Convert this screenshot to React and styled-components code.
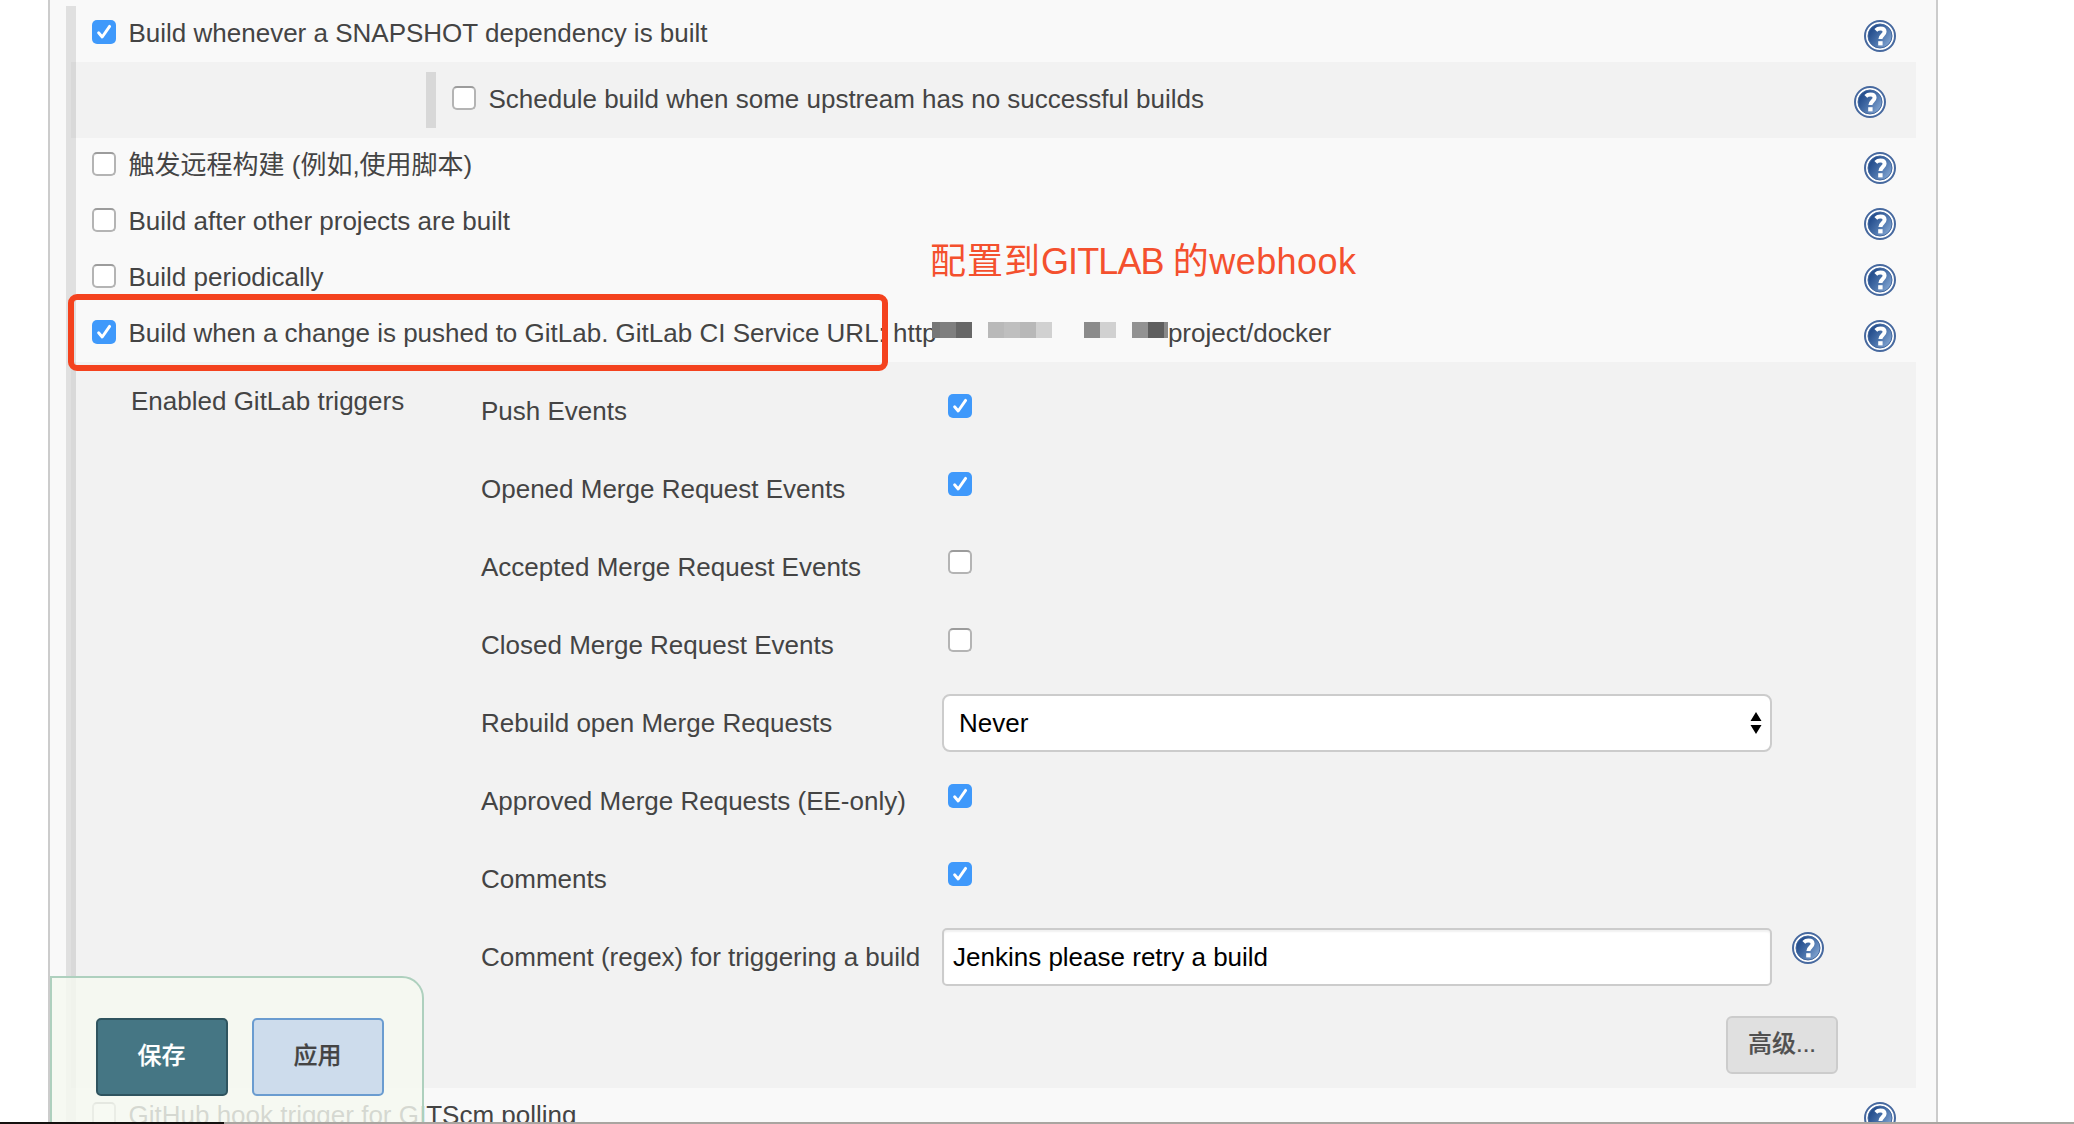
import React from "react";
import styled, { createGlobalStyle } from "styled-components";

const FONT = '"Liberation Sans", "Noto Sans CJK SC", sans-serif';

const Global = createGlobalStyle`
  * { box-sizing: border-box; }
  body { margin: 0; background: #fff; }
  button, input { font-family: inherit; margin: 0; }
`;

const Screen = styled.div`
  position: relative;
  width: 2074px;
  height: 1124px;
  overflow: hidden;
  padding-left: 48px;
  font: 26px/54px ${FONT};
  color: #444;
`;

const Panel = styled.main`
  width: 1890px;
  height: 1124px;
  padding: 6px 20px 0 16px;
  background: #f9f9f9;
  border: solid #ccc;
  border-width: 0 2px;
`;

const Section = styled.section`
  height: 1130px;
  border-left: 10px solid #e0e0e0;
`;

const Row = styled.div`
  display: flex;
  align-items: flex-start;
  height: 56px;
  padding: 14px 20px 0 16px;
`;

const NestedRow = styled.div`
  height: 76px;
  margin-left: -5px;
  padding: 10px 10px 10px 350px;
  background: #f2f2f2;
  border-left: 5px solid #d9d9d9;

  ${Row} {
    border-left: 10px solid #d8d8d8;
  }
`;

const Label = styled.span`
  margin: -14px 0 0 12.5px;
  height: 56px;
  white-space: pre;
`;

const Box = styled.span`
  flex: none;
  display: block;
  width: 24px;
  height: 24px;
  border-radius: 5px;
  background: ${(p) => (p.$on ? "#3f99fb" : "#fff")};
  border: ${(p) => (p.$on ? "0" : "2px solid #b4b4b4")};
  border-top-color: #9c9c9c;
  svg { display: block; }
`;

const HelpSlot = styled.span`
  flex: none;
  margin-left: auto;
  width: 32px;
  height: 32px;
  svg { display: block; }
`;

const Url = styled.span`
  margin-top: -14px;
  height: 56px;
  white-space: pre;
`;

const Mosaic = styled.span`
  display: flex;
  width: 236px;
  height: 16px;
  margin: 2px 0 0 -4.5px;
`;

const Tile = styled.i`
  flex: none;
  width: ${(p) => p.$w}px;
  height: 16px;
  background: ${(p) => p.$c};
`;

const Triggers = styled.div`
  display: flex;
  height: 726px;
  margin-left: -5px;
  padding: 10px 78px 0 55px;
  background: #f2f2f2;
  border-left: 5px solid #d9d9d9;
`;

const GroupTitle = styled.div`
  flex: none;
  width: 350px;
  padding-top: 2px;
`;

const Settings = styled.div`
  flex: 1;
  display: flex;
  flex-direction: column;
`;

const Setting = styled.div`
  display: grid;
  grid-template-columns: 461px 830px 52px;
  height: 78px;
`;

const SettingName = styled.span`
  line-height: 78px;
  white-space: pre;
`;

const Cell = styled.span`
  padding: ${(p) => p.$pad};
`;

const Select = styled.div`
  display: flex;
  align-items: center;
  justify-content: space-between;
  height: 58px;
  padding: 0 8px 0 15px;
  color: #000;
  background: #fff;
  border: 2px solid #ccc;
  border-radius: 8px;
`;

const Input = styled.input`
  display: block;
  width: 100%;
  height: 58px;
  padding: 0 9px;
  color: #000;
  font-size: 26px;
  background: #fff;
  border: 2px solid #ccc;
  border-radius: 5px;
  box-shadow: inset 0 2px 2px rgba(0, 0, 0, 0.06);
  outline: none;
`;

const Advanced = styled.button`
  align-self: flex-end;
  width: 112px;
  height: 58px;
  margin: 20px 0 0;
  padding: 0 0 7px;
  color: #505050;
  font-size: 24px;
  font-weight: 500;
  -webkit-text-stroke: 0.2px currentColor;
  background: #e0e0e0;
  border: 2px solid #ccc;
  border-radius: 6px;
`;

const Highlight = styled.div`
  position: absolute;
  left: 68px;
  top: 294px;
  width: 820px;
  height: 77px;
  border: 6px solid #f4421e;
  border-radius: 9px;
`;

const Annotation = styled.div`
  position: absolute;
  left: 930px;
  top: 237px;
  color: #f4502e;
  font-size: 36px;
  line-height: 50px;
  white-space: pre;
`;

const Spaced = styled.span`
  letter-spacing: ${(p) => p.$track}px;
`;

const Sticky = styled.footer`
  position: absolute;
  left: 50px;
  top: 976px;
  width: 374px;
  height: 160px;
  display: flex;
  gap: 24px;
  padding: 40px 0 0 44px;
  background: rgba(245, 249, 240, 0.82);
  border: 2px solid #aed0be;
  border-radius: 0 22px 0 0;
`;

const Action = styled.button`
  width: 132px;
  height: 78px;
  padding: 0 1px 7px 0;
  font-size: 24px;
  font-weight: 500;
  -webkit-text-stroke: 0.2px currentColor;
  color: ${(p) => (p.$primary ? "#fff" : "#444")};
  background: ${(p) => (p.$primary ? "#457684" : "#cddcec")};
  border: 2px solid ${(p) => (p.$primary ? "#2f545f" : "#6a9cd0")};
  border-radius: 5px;
`;

const BottomEdge = styled.div`
  position: absolute;
  left: 0;
  right: 0;
  top: 1122px;
  height: 2px;
  background: #a9a5a0;
  &::before {
    content: "";
    display: block;
    width: 224px;
    height: 2px;
    background: #15110f;
  }
`;

function Check({ on }) {
  return (
    <Box $on={on}>
      {on && (
        <svg width="24" height="24" viewBox="0 0 24 24" fill="none">
          <path d="M6.6 12.8 10.2 17 17.6 6.4" stroke="#fff" strokeWidth="2.9" strokeLinecap="round" strokeLinejoin="round" />
        </svg>
      )}
    </Box>
  );
}

function Help() {
  return (
    <HelpSlot>
      <svg width="32" height="32" viewBox="0 0 32 32" fill="none">
        <defs>
          <linearGradient id="ball" x1="6" y1="9" x2="27" y2="24" gradientUnits="userSpaceOnUse">
            <stop offset="0.1" stopColor="#27508f" />
            <stop offset="0.5" stopColor="#4a72aa" />
            <stop offset="1" stopColor="#86a8d4" />
          </linearGradient>
        </defs>
        <circle cx="16" cy="16" r="15" fill="#fff" stroke="#47699f" strokeWidth="2" />
        <circle cx="16" cy="16" r="12" fill="url(#ball)" stroke="#44699f" strokeWidth="1" />
        <path d="M11.8 10.4C13.2 9 14.8 8.6 16.4 8.6c2.7 0 4.2 1.2 4.2 3.2 0 3-4.2 3.4-4.2 7.2" stroke="#fff" strokeWidth="4" />
        <rect x="14.2" y="21.2" width="4.4" height="4.2" fill="#fff" />
      </svg>
    </HelpSlot>
  );
}

function Trigger({ on, children }) {
  return (
    <Row>
      <Check on={on} />
      <Label>{children}</Label>
      <Help />
    </Row>
  );
}

function CheckSetting({ name, on }) {
  return (
    <Setting>
      <SettingName>{name}</SettingName>
      <Cell $pad="22px 6px"><Check on={on} /></Cell>
    </Setting>
  );
}

const tiles = [
  [8, "#777"], [16, "#7f7f7f"], [16, "#676767"], [16, "transparent"],
  [16, "#b9b9b9"], [16, "#bfbfbf"], [16, "#b8b8b8"], [16, "#d1d1d1"], [32, "transparent"],
  [16, "#8b8b8b"], [16, "#d1d1d1"], [16, "transparent"],
  [16, "#929292"], [16, "#5e5e5e"], [4, "#888"],
];

export default function App() {
  return (
    <Screen>
      <Global />
      <Panel>
        <Section>
          <Trigger on>Build whenever a SNAPSHOT dependency is built</Trigger>
          <NestedRow>
            <Trigger>Schedule build when some upstream has no successful builds</Trigger>
          </NestedRow>
          <Trigger>触发远程构建 (例如,使用脚本)</Trigger>
          <Trigger>Build after other projects are built</Trigger>
          <Trigger>Build periodically</Trigger>
          <Row>
            <Check on />
            <Label>Build when a change is pushed to GitLab. GitLab CI Service URL: http</Label>
            <Mosaic>
              {tiles.map(([w, c], i) => <Tile key={i} $w={w} $c={c} />)}
            </Mosaic>
            <Url>project/docker</Url>
            <Help />
          </Row>
          <Triggers>
            <GroupTitle>Enabled GitLab triggers</GroupTitle>
            <Settings>
              <CheckSetting name="Push Events" on />
              <CheckSetting name="Opened Merge Request Events" on />
              <CheckSetting name="Accepted Merge Request Events" />
              <CheckSetting name="Closed Merge Request Events" />
              <Setting>
                <SettingName>Rebuild open Merge Requests</SettingName>
                <Cell $pad="10px 0">
                  <Select>
                    Never
                    <svg width="12" height="24" viewBox="0 0 12 24">
                      <path d="M6 1 11.5 10H.5ZM6 23 .5 14h11Z" fill="#000" />
                    </svg>
                  </Select>
                </Cell>
              </Setting>
              <CheckSetting name="Approved Merge Requests (EE-only)" on />
              <CheckSetting name="Comments" on />
              <Setting>
                <SettingName>Comment (regex) for triggering a build</SettingName>
                <Cell $pad="10px 0"><Input defaultValue="Jenkins please retry a build" /></Cell>
                <Cell $pad="14px 0 0 20px"><Help /></Cell>
              </Setting>
              <Advanced>高级...</Advanced>
            </Settings>
          </Triggers>
          <Trigger>GitHub hook trigger for GITScm polling</Trigger>
        </Section>
      </Panel>
      <Highlight />
      <Annotation>
        <Spaced $track={1}>配置到</Spaced>
        <Spaced $track={-0.9}>GITLAB </Spaced>
        <Spaced $track={0.45}>的webhook</Spaced>
      </Annotation>
      <Sticky>
        <Action $primary>保存</Action>
        <Action>应用</Action>
      </Sticky>
      <BottomEdge />
    </Screen>
  );
}
